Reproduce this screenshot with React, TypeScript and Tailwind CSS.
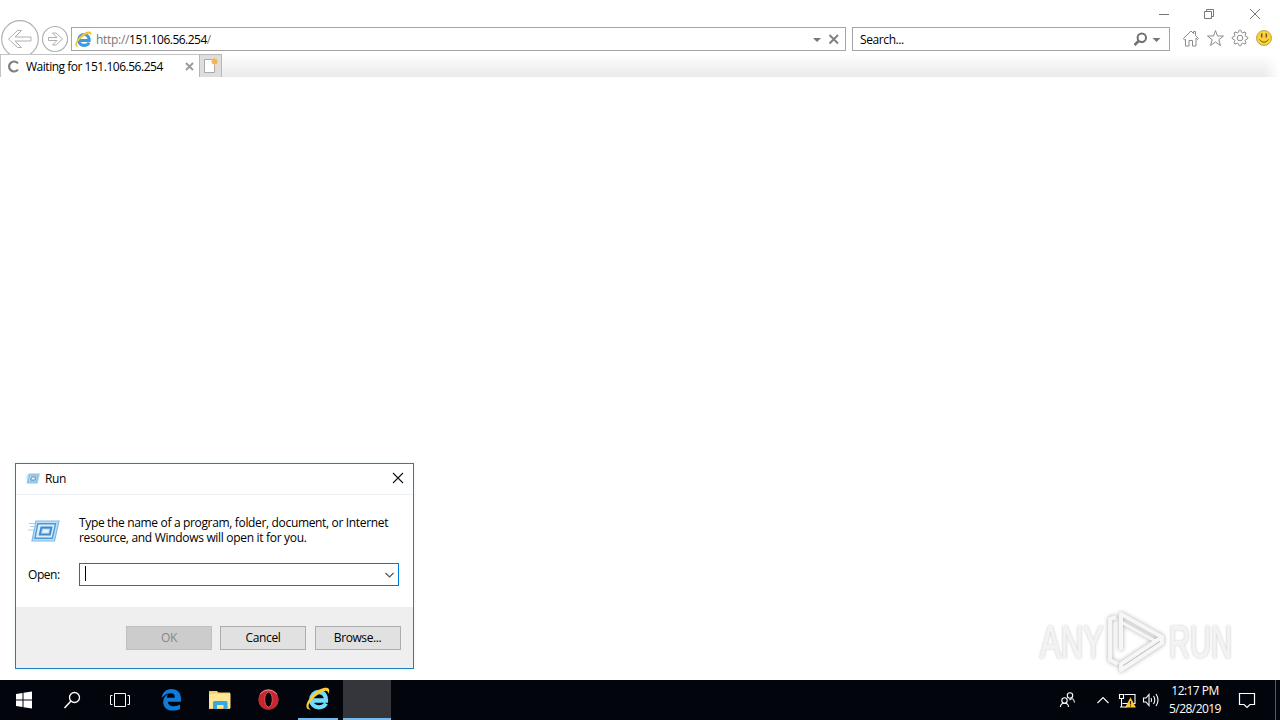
import React from "react";

function WindowControls() {
  return (
    <div className="flex h-[27px] justify-end pr-[18px] pt-[8px]">
      <svg width="103" height="12" viewBox="1159 8 103 12" fill="none" stroke="#777" strokeWidth="1">
        <path d="M1159 14.5h10" />
        <path d="M1204.500 11.500h7v7h-7zM1206.500 11.500v-2h7v7h-2" />
        <path d="M1250 9l10 10M1260 9l-10 10" />
      </svg>
    </div>
  );
}

function NavButtons() {
  return (
    <svg className="-mt-[7px] shrink-0" width="71" height="34" viewBox="0 20 71 34" fill="white" stroke="#b0b0b0">
      <circle cx="20" cy="39" r="18.300" strokeWidth="1.200" />
      <path d="M8.500 39l9-8.500h4l-6.500 6.500h16v4H15l6.500 6.500h-4z" />
      <circle cx="55" cy="39" r="12.500" strokeWidth="1.200" />
      <path d="M62.500 39l-6.500-6h-3.500l4.500 4.500h-8.500v3H57L52.500 45H56z" />
    </svg>
  );
}

function ExplorerLogo({ size, light }: { size: number; light?: boolean }) {
  return (
    <svg width={size} height={size} viewBox="0 0 24 24" fill="none">
      <path
        d="M20 16.500C18.500 19 16 20.300 12.800 20.300 8.500 20.300 5.200 17.300 5.200 12.800S8.500 5 12.800 5c4.600 0 7.500 3.300 7.200 8.500H7.500"
        stroke={light ? "#72dcfb" : "#3c9be0"}
        strokeWidth="4.300"
      />
      <path
        d="M5 22.500C-2.500 23.500 0 14.500 6.500 8S21-1 23 2.300c.6 1.200 0 2.900-.8 4.700.2-2.800-1.800-4.100-5-2.500C10 7.500 2 16 2.500 19.500c.2 1.300 1.200 2.200 2.500 3z"
        fill={light ? "#ffcd32" : "#efc33a"}
      />
    </svg>
  );
}

function AddressBar() {
  return (
    <div className="flex h-6 w-[775px] shrink-0 items-center border border-[#a5a5a5] bg-white pl-[3px] pr-[5px]">
      <ExplorerLogo size={17} />
      <span className="ml-[4px] mt-px flex-1 text-[12px] tracking-[-0.3px] text-[#777]">
        http://<span className="tracking-[-0.52px] text-black">151.106.56.254</span>/
      </span>
      <svg width="28" height="14" viewBox="812 32 28 14">
        <path d="M813 38h8l-4 4z" fill="#777" />
        <path d="M829.500 35l8.500 8.500M838 35l-8.500 8.500" stroke="#808080" strokeWidth="2" />
      </svg>
    </div>
  );
}

function SearchBox() {
  return (
    <div className="ml-[6px] flex h-6 w-[318px] shrink-0 items-center justify-between border border-[#a5a5a5] bg-white pl-[7px] pr-[8px] text-[12px]">
      <span className="mt-px tracking-[-0.4px]">Search...</span>
      <svg width="27" height="14" viewBox="1134 32 27 14" fill="none">
        <circle cx="1141.800" cy="37.800" r="4.200" stroke="#707070" strokeWidth="2" />
        <path d="M1138.500 41l-4 4" stroke="#707070" strokeWidth="2.600" />
        <path d="M1152.500 38h8l-4 4z" fill="#777" />
      </svg>
    </div>
  );
}

const gearPath = Array.from({ length: 32 }, (_, i) => {
  const a = ((i - 0.5) / 32) * Math.PI * 2;
  const r = i % 4 < 2 ? 7.8 : 5.8;
  return `${i ? "L" : "M"}${(1240 + r * Math.cos(a)).toFixed(2)} ${(38 + r * Math.sin(a)).toFixed(2)}`;
}).join("") + "Z";

function ToolbarIcons() {
  return (
    <svg className="ml-[12px] shrink-0" width="92" height="24" viewBox="1182 27 92 24" fill="none" stroke="#8b8b8b">
      <path d="M1183.500 38.500l7.500-7.500 2.500 2.500v-2h2v4l3 3-1 1-1.500-1.500V46h-3.500v-5.500h-3.500V46h-3.500v-6.500l-1 .5z" />
      <path d="M1215.500 30.500l2 5.500h6l-4.700 3.700 1.700 5.800-5-3.500-5 3.500 1.700-5.800-4.700-3.700h6z" />
      <path d={gearPath} />
      <circle cx="1240" cy="38" r="2.800" />
      <circle cx="1264" cy="38" r="7.500" fill="#fbd13b" stroke="#c2a64b" />
      <path d="M1261.700 33.500v4M1266.300 33.500v4" stroke="#735c16" strokeWidth="1.500" />
      <path d="M1259.500 39.500q4.500 5.500 9 0" stroke="#735c16" />
    </svg>
  );
}

function TabStrip() {
  return (
    <div className="flex h-[23px] bg-linear-to-b from-white to-[#eaeaea]">
      <div className="flex w-[199px] items-center border-l border-t border-[#c4c4c4] bg-white pl-[6px] pr-[5px]">
        <svg width="13" height="13" viewBox="0 0 13 13" fill="none" stroke="#808080" strokeWidth="2.200">
          <path d="M11 3.400a5 5 0 1 0 0 6.200" />
        </svg>
        <span className="ml-[6px] mt-[2px] flex-1 whitespace-nowrap text-[12px] tracking-[-0.48px]">Waiting for 151.106.56.254</span>
        <svg width="9" height="9" viewBox="0 0 9 9" stroke="#999" strokeWidth="1.800">
          <path d="M1 1l7 7M8 1L1 8" />
        </svg>
      </div>
      <div className="w-[23px] border border-b-0 border-[#b8b8b8] bg-[#dedede]">
        <svg width="21" height="22" viewBox="200 55 21 22" fill="none">
          <path d="M204.500 59.500h10v13h-10z" fill="white" stroke="#aaa" />
          <circle cx="214.500" cy="61.500" r="2.500" fill="#f6ad3b" />
          <path d="M214.500 58v7M211 61.500h7M212 59l5 5M217 59l-5 5" stroke="#f6b54c" />
        </svg>
      </div>
      <div className="flex-1" />
      <div className="w-[16px] bg-linear-to-r from-white/0 to-white" />
    </div>
  );
}

function RunIcon({ width, height }: { width: number; height: number }) {
  return (
    <svg width={width} height={height} viewBox="0 0 32 22" fill="none">
      <path d="M8 1h23l-4.500 20H4z" fill="#bcdff6" stroke="#7fbbe8" strokeWidth="1.200" />
      <path d="M9.800 3.800h17.700l-3.200 14.400H7z" fill="#dceefa" stroke="#4f98d6" strokeWidth="1.400" />
      <path d="M13.300 7.500h10.200l-1.600 7.200H11.700z" fill="#a5cdef" stroke="#4388c6" strokeWidth="1.800" />
      <path d="M15 9.500h6l-.7 3.200h-6z" fill="#e8f4fc" />
      <path d="M1 3.500h6M2 6.500h5M0 10h6" stroke="#a6d0ef" />
    </svg>
  );
}

function RunDialog() {
  return (
    <div className="absolute left-[15px] top-[463px] flex h-[206px] w-[399px] flex-col border border-[#1d7fc4] bg-white text-[12px] tracking-[-0.34px] shadow-[0_0_5px_rgba(130,200,240,0.15)]">
      <div className="flex h-[31px] shrink-0 items-center border-b border-[#ebf1f4] pb-px pl-[9px] pr-[9px]">
        <RunIcon width={15} height={11} />
        <span className="ml-[5px] mt-px flex-1">Run</span>
        <svg className="-mt-px" width="12" height="12" viewBox="0 0 12 12" stroke="#111" strokeWidth="1.100">
          <path d="M1 1l10 10M11 1L1 11" />
        </svg>
      </div>
      <div className="flex h-[112px] shrink-0 flex-col pl-[12px]">
        <div className="flex h-[68px] pt-[20px]">
          <div className="w-[51px] pt-[5px]">
            <RunIcon width={32} height={22} />
          </div>
          <p className="whitespace-nowrap leading-[15px]">
            <span>Type the name of a program, folder, document, or Internet</span>
            <br />
            <span className="tracking-[-0.31px]">resource, and Windows will open it for you.</span>
          </p>
        </div>
        <div className="flex items-center">
          <span className="w-[51px] tracking-[-0.45px]">Open:</span>
          <div className="flex h-[23px] w-[320px] items-center justify-between border border-[#0078d7] pl-[5px] pr-[4px]">
            <div className="h-[15px] w-px -translate-y-px bg-black" />
            <svg width="9" height="6" viewBox="0 0 9 6" fill="none" stroke="#555" strokeWidth="1.200">
              <path d="M.5 1l4 4 4-4" />
            </svg>
          </div>
        </div>
      </div>
      <div className="flex flex-1 gap-[8px] bg-[#efefef] pl-[110px] pt-[19px]">
        <button className="h-6 w-[86px] border border-[#bfbfbf] bg-[#cccccc] text-[#888]">OK</button>
        <button className="h-6 w-[86px] border border-[#adadad] bg-[#e1e1e1]">Cancel</button>
        <button className="ml-px h-6 w-[86px] border border-[#adadad] bg-[#e1e1e1] pr-px tracking-[-0.42px]">Browse...</button>
      </div>
    </div>
  );
}

function Watermark() {
  return (
    <div className="absolute left-[1040px] top-[605px] flex h-[70px] w-[200px] items-center font-['Liberation_Sans',sans-serif] text-[47px] text-[#f3f3f3] [text-shadow:0_0_3px_#999]">
      <span className="w-[66px] shrink-0 origin-left scale-x-[.66] pt-[2px] leading-none [-webkit-text-stroke:1.500px_#f3f3f3]">ANY</span>
      <svg className="shrink-0 drop-shadow-[0_0_2px_#aaa]" width="62" height="70" viewBox="1106 605 62 70" fill="none" stroke="#f6f6f6" strokeWidth="4" strokeLinejoin="round">
        <path d="M1116 617l-6 2v41l8 4M1121 650v-36l41 23-41 27v6l41-27v-5" />
        <path d="M1121 622l34 19" strokeWidth="3" />
      </svg>
      <span className="ml-px w-[66px] shrink-0 origin-left scale-x-[.62] pt-[2px] leading-none [-webkit-text-stroke:1.500px_#f3f3f3]">RUN</span>
    </div>
  );
}

function Taskbar() {
  return (
    <div className="flex h-10 shrink-0 bg-[#02050c] text-white">
      <svg width="298" height="40" viewBox="0 680 298 40" fill="none">
        <path d="M16 694l6.500-1v6.500H16zM23.500 692.800l8.500-1.300v8h-8.500zM16 700.500h6.500v6.500l-6.500-1zM23.500 700.500H32v8l-8.500-1.300z" fill="white" />
        <circle cx="74.500" cy="697.500" r="5" stroke="white" strokeWidth="1.300" />
        <path d="M71 701l-6.500 7" stroke="white" strokeWidth="1.500" />
        <path d="M114.500 693.500h11v13h-11zM112.500 695.500h-2v9h2M127.500 695.500h2v9h-2" stroke="white" />
        <path d="M161.500 698c1-6 5-9 10-9 6 0 9.500 4 9.500 9.500v3.200h-13.200c.3 3.300 3 4.500 6 4.500 2.400 0 4.300-.6 6.200-1.700v4.500c-2 1.100-4.500 1.600-7.300 1.600-6 0-9.500-3.700-9.500-8.600 0-3.600 2-6.300 5-7.700-.8 1-1.200 2-1.300 3.500h8c0-3.400-1.500-4.600-4.200-4.600-3.500 0-6.500 1.900-9.200 4.800z" fill="#0e7cd8" />
        <path d="M209 691h8l1.500 1.500H230V709h-21z" fill="#f5cd65" />
        <path d="M210 693.500h20.500V708H209v-13z" fill="#ffe697" />
        <path d="M213 709v-6.500q0-1.500 1.500-1.500h11.500q1.500 0 1.500 1.500v6.500h-4v-4h-6.500v4z" fill="#35a9dc" />
        <ellipse cx="268.500" cy="699.500" rx="10.300" ry="10.500" fill="#c52730" />
        <path d="M260 694q8-8 17 0" stroke="#ee8587" />
        <ellipse cx="268.500" cy="699.500" rx="3.800" ry="7.500" fill="#080207" stroke="#e2565a" />
      </svg>
      <div className="flex w-10 items-center justify-center border-b-2 border-[#76b9ed]">
        <ExplorerLogo size={24} light />
      </div>
      <div className="ml-[5px] w-12 border-b-2 border-[#76b9ed] bg-[#35363b]" />
      <div className="flex-1" />
      <svg width="104" height="40" viewBox="1060 680 104 40" fill="none" stroke="white" strokeWidth="1.100">
        <circle cx="1070" cy="695.500" r="2.700" />
        <path d="M1069.500 700q4-3.500 5 2.500" />
        <circle cx="1064.500" cy="700.500" r="2.700" />
        <path d="M1060.500 707q0-3.800 4-3.800t4 3.800" />
        <path d="M1097.500 703l5.500-5.500 5.500 5.500" />
        <path d="M1124.500 694.500h10.500v9h-12.500M1120 707h7M1119.500 694.500h4v4h-4zM1121.500 698.500v8" />
        <path d="M1130.500 698.500l4.500 8.500h-9z" fill="#ffc62f" stroke="#ffc62f" />
        <path d="M1130.500 701v3.500M1130.500 705.500v1" stroke="#282008" />
        <path d="M1143.500 698h2.500l3-3.500v11l-3-3.500h-2.500z" />
        <path d="M1151 698q1.300 2 0 4M1153.500 696q2.600 4 0 8M1156 694q4 6 0 12" />
      </svg>
      <div className="flex w-[62px] flex-col items-center whitespace-nowrap pt-[2px] text-[12px] leading-[18px] tracking-[-0.55px]">
        <span>12:17 PM</span>
        <span>5/28/2019</span>
      </div>
      <svg width="54" height="40" viewBox="1226 680 54 40" fill="none" stroke="white">
        <path d="M1239.500 693.500h15v11h-4.500l-3 3-3-3h-4.500z" strokeWidth="1.200" />
        <path d="M1275.500 680v40" stroke="#555b62" />
      </svg>
    </div>
  );
}

export default function App() {
  return (
    <div className="relative flex h-[720px] w-[1280px] flex-col overflow-hidden bg-white font-['Open_Sans','Noto_Sans',sans-serif] text-black">
      <WindowControls />
      <div className="flex h-[27px] shrink-0">
        <NavButtons />
        <AddressBar />
        <SearchBox />
        <ToolbarIcons />
      </div>
      <TabStrip />
      <main className="flex-1 bg-white" />
      <Taskbar />
      <RunDialog />
      <Watermark />
    </div>
  );
}
